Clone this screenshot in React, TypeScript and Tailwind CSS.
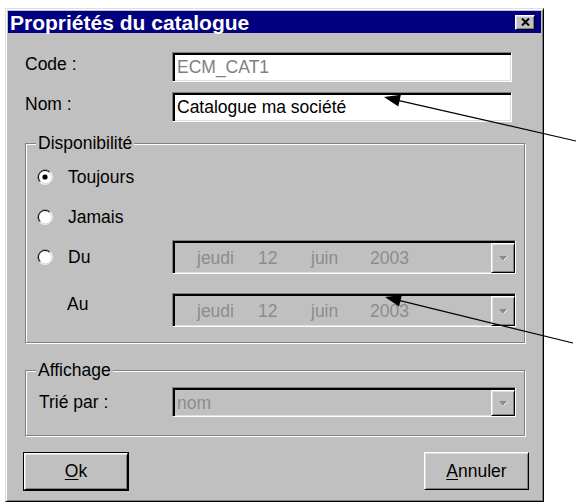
const sunken =
  "border border-t-[#808080] border-l-[#808080] border-r-white border-b-white shadow-[inset_2px_2px_#000,inset_-1px_-1px_#dfdfdf]";
const raised =
  "border border-t-white border-l-white border-r-black border-b-black shadow-[inset_1px_1px_#dfdfdf,inset_-1px_-1px_#808080]";
const etched = "border border-[#808080] shadow-[inset_1px_1px_#fff,1px_1px_#fff]";

function Radio({ checked = false }: { checked?: boolean }) {
  return (
    <svg width="16" height="16" viewBox="0 0 16 16" className="shrink-0">
      <circle cx="8" cy="8" r="6.5" fill="#fff" />
      <path d="M2.7 13.3 A7.5 7.5 0 0 1 13.3 2.7" fill="none" stroke="#808080" strokeWidth="1" />
      <path d="M13.3 2.7 A7.5 7.5 0 0 1 2.7 13.3" fill="none" stroke="#fff" strokeWidth="1" />
      <path d="M3.4 12.6 A6.5 6.5 0 0 1 12.6 3.4" fill="none" stroke="#000" strokeWidth="1" />
      <path d="M12.6 3.4 A6.5 6.5 0 0 1 3.4 12.6" fill="none" stroke="#dfdfdf" strokeWidth="1" />
      {checked && <circle cx="8" cy="8" r="2.6" fill="#000" />}
    </svg>
  );
}

function DropButton() {
  return (
    <div className={`${raised} ml-auto flex w-[24px] self-stretch items-center justify-center bg-[#c0c0c0]`}>
      <svg width="10" height="6" viewBox="0 0 10 6">
        <path d="M1 1 H9 L5 5.5 Z" fill="#8a8a8a" />
        <path d="M5.5 5.5 L9.5 1.5" stroke="#fff" strokeWidth="0.8" />
      </svg>
    </div>
  );
}

function DateBox() {
  return (
    <div className={`${sunken} flex h-[34px] w-[344px] items-stretch bg-[#c0c0c0] pl-[2px] pt-[2px]`}>
      <div className="flex items-center pl-[22px] text-[#8c8c8c]">
        <span className="w-[61px]">jeudi</span>
        <span className="w-[53px]">12</span>
        <span className="w-[59px]">juin</span>
        <span>2003</span>
      </div>
      <DropButton />
    </div>
  );
}

function GroupLabel({ children }: { children: string }) {
  return (
    <span className="absolute -top-[11px] left-[10px] bg-[#c0c0c0] px-[2px] leading-[20px]">{children}</span>
  );
}

export default function App() {
  return (
    <div className="relative h-[504px] w-[576px] overflow-hidden bg-white font-['Liberation_Sans',Arial,sans-serif] text-[17.5px] text-black">
      <div className="pl-[5px] pt-[8px]">
        <div className="flex h-[494px] w-[539px] flex-col border border-t-[#dfdfdf] border-l-[#dfdfdf] border-r-black border-b-black bg-[#c0c0c0] p-[2px] shadow-[inset_1px_1px_#fff,inset_-1px_-1px_#808080]">
          {/* title bar */}
          <div className="flex h-[22px] items-center bg-[#000080] pl-[2px] pr-[6px]">
            <span className="text-[21px] font-bold leading-none text-white">Propriétés du catalogue</span>
            <div className={`${raised} ml-auto flex h-[15px] w-[20px] items-center justify-center bg-[#c0c0c0]`}>
              <svg width="9" height="8" viewBox="0 0 9 8">
                <path d="M1 0.5 L8 7.5 M8 0.5 L1 7.5" stroke="#000" strokeWidth="2" />
              </svg>
            </div>
          </div>

          {/* code / nom */}
          <div className="mt-[19px] flex h-[30px] items-center">
            <span className="mb-[6px] w-[164px] pl-[17px]">Code :</span>
            <div className={`${sunken} flex h-[30px] w-[340px] items-center bg-white pl-[4px] text-[#808080]`}>ECM_CAT1</div>
          </div>
          <div className="mt-[10px] flex h-[30px] items-center">
            <span className="mb-[6px] w-[164px] pl-[17px]">Nom :</span>
            <div className={`${sunken} flex h-[30px] w-[340px] items-center bg-white pl-[4px]`}>Catalogue ma société</div>
          </div>

          {/* disponibilité */}
          <div className={`${etched} relative ml-[17px] mt-[21px] flex w-[500px] flex-col pb-[15px]`}>
            <GroupLabel>Disponibilité</GroupLabel>
            <div className="mt-[18px] flex h-[30px] items-center gap-[15px] pl-[11px]">
              <Radio checked />
              <span>Toujours</span>
            </div>
            <div className="mt-[10px] flex h-[30px] items-center gap-[15px] pl-[11px]">
              <Radio />
              <span>Jamais</span>
            </div>
            <div className="mt-[8px] flex h-[34px] items-center">
              <div className="flex w-[146px] items-center gap-[15px] pl-[11px]">
                <Radio />
                <span>Du</span>
              </div>
              <DateBox />
            </div>
            <div className="mt-[19px] flex h-[34px] items-center">
              <span className="mb-[12px] w-[146px] pl-[41px]">Au</span>
              <DateBox />
            </div>
          </div>

          {/* affichage */}
          <div className={`${etched} relative ml-[17px] mt-[27px] flex w-[500px] flex-col pb-[18px]`}>
            <GroupLabel>Affichage</GroupLabel>
            <div className="mt-[16px] flex h-[30px] items-center">
              <span className="w-[146px] pl-[13px]">Trié par :</span>
              <div className={`${sunken} flex h-[30px] w-[344px] items-stretch bg-[#c0c0c0] pl-[2px] pt-[2px]`}>
                <span className="flex items-center pl-[2px] text-[#8c8c8c]">nom</span>
                <DropButton />
              </div>
            </div>
          </div>

          {/* buttons */}
          <div className="mt-[16px] flex justify-between pl-[15px] pr-[12px]">
            <div className="border border-black">
              <div className={`${raised} flex h-[37px] w-[104px] items-center justify-center`}>
                <span>
                  <span className="underline underline-offset-2">O</span>k
                </span>
              </div>
            </div>
            <div className={`${raised} flex h-[38px] w-[105px] items-center justify-center`}>
              <span>
                <span className="underline underline-offset-2">A</span>nnuler
              </span>
            </div>
          </div>
        </div>
      </div>

      {/* annotation arrows */}
      <svg className="pointer-events-none absolute inset-0" width="576" height="504" viewBox="0 0 576 504">
        <line x1="398" y1="100.3" x2="576" y2="141" stroke="#000" strokeWidth="1.2" />
        <polygon points="384,97 398.3,106.4 400.9,94.7" fill="#000" />
        <line x1="399" y1="300.4" x2="573" y2="343" stroke="#000" strokeWidth="1.2" />
        <polygon points="385,297 399.1,306.6 401.9,295" fill="#000" />
      </svg>
    </div>
  );
}
